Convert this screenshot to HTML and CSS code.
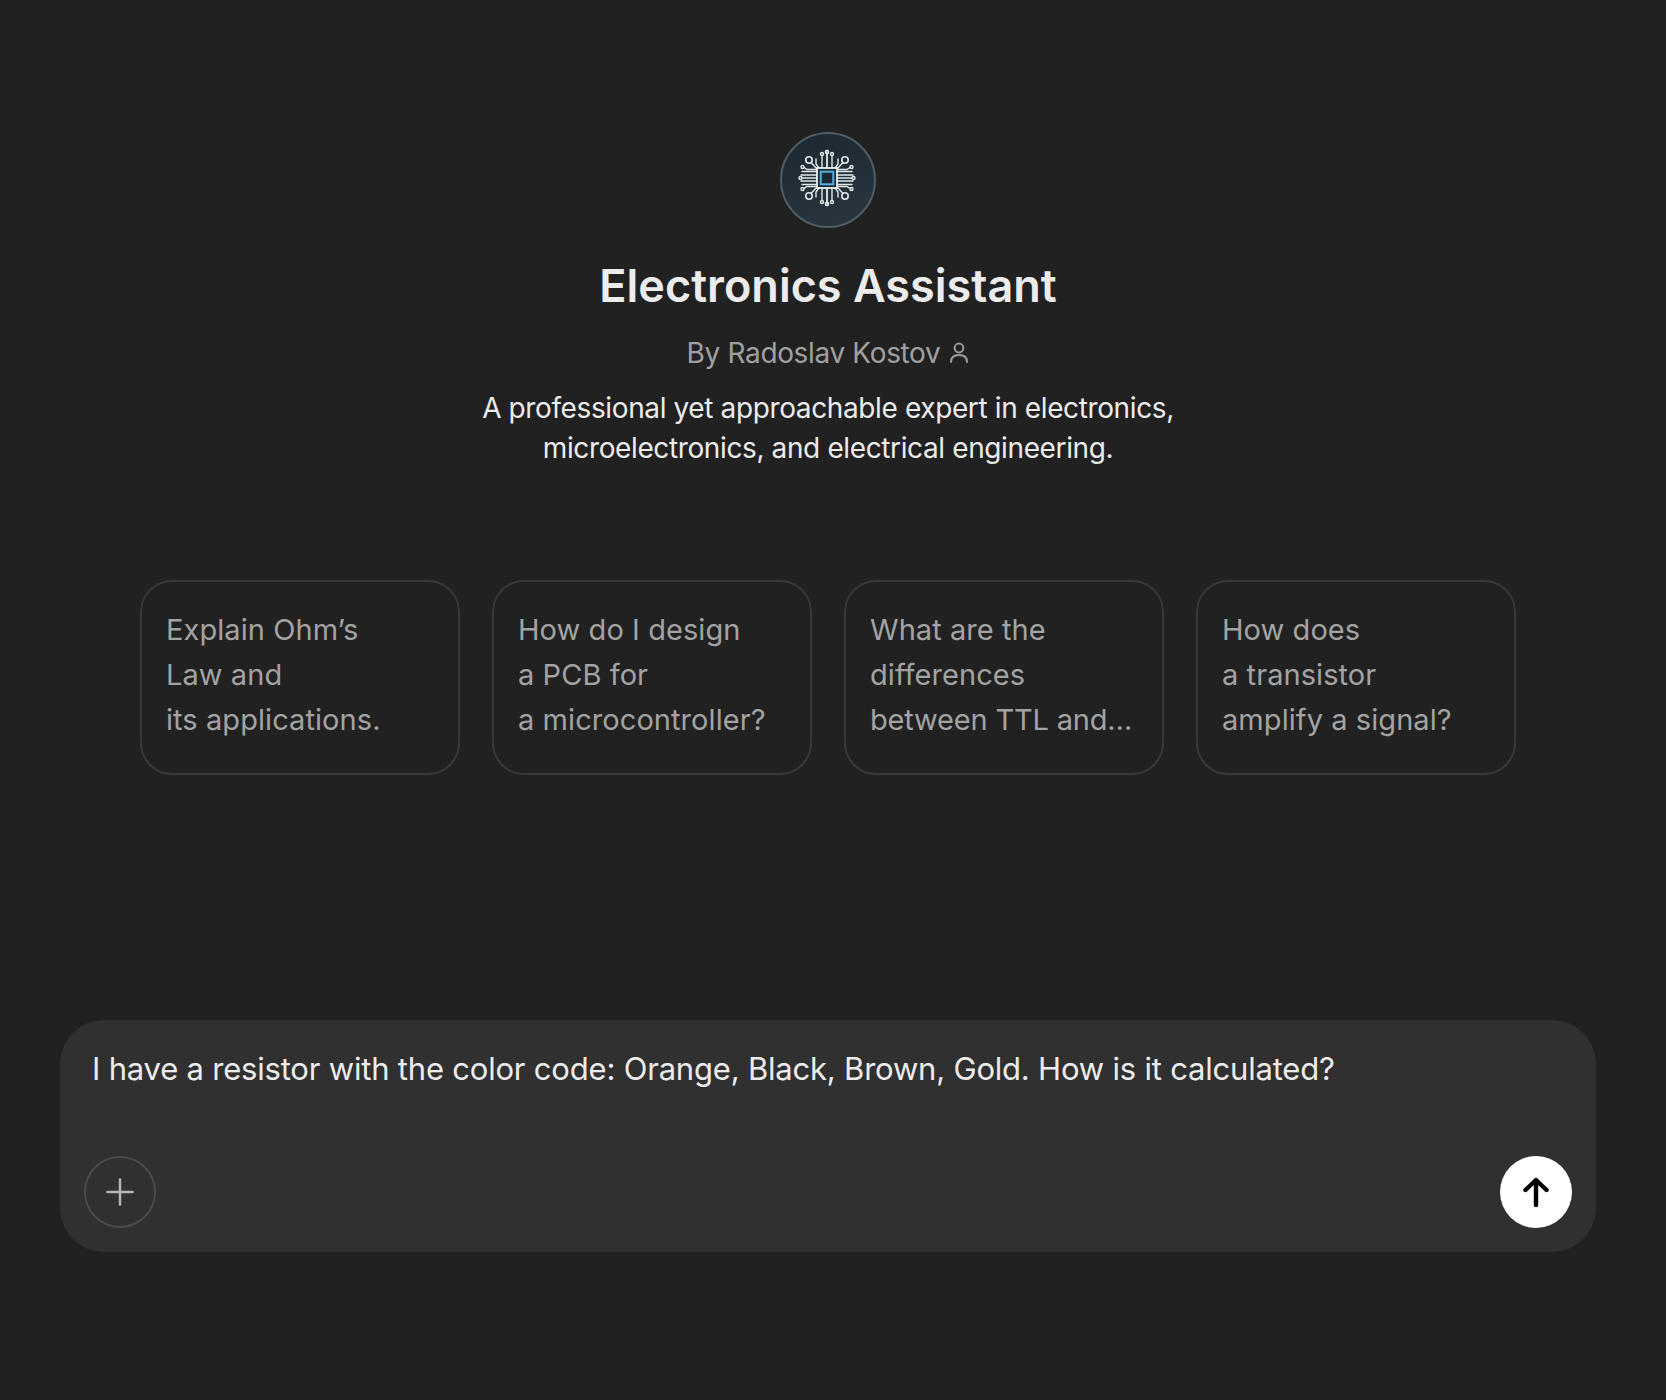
FILE: index.html
```html
<!DOCTYPE html>
<html lang="en">
<head>
    <meta charset="UTF-8">
    <meta name="viewport" content="width=device-width, initial-scale=1.0">
    <title>Electronics Assistant</title>
    <link rel="stylesheet" href="styles.css">
</head>
<body>
    <div class="page">
        <div class="profile">
            <div class="avatar">
                <svg class="chip-icon" viewBox="-30 -30 60 60" fill="none" stroke="#e2e7ea" stroke-width="1.4" stroke-linecap="round">
                    <defs>
                        <g id="quarter">
                            <path d="M-10 -6.5H-25M-10 -3H-26"/>
                            <path d="M-5 -10V-22.5"/>
                            <circle cx="-5" cy="-24" r="1.5"/>
                            <path d="M0 -10V-24.5"/>
                            <circle cx="0" cy="-26" r="1.5"/>
                            <path d="M-8 -10L-11 -14V-19"/>
                            <path d="M-10 -9L-16 -15.5"/>
                            <circle cx="-18" cy="-18" r="3.2" stroke-width="1.6"/>
                            <path d="M-10.5 -8.5H-20L-23 -10.5"/>
                            <circle cx="-24.5" cy="-11" r="1.5"/>
                        </g>
                    </defs>
                    <use href="#quarter"/>
                    <use href="#quarter" transform="scale(-1 1)"/>
                    <use href="#quarter" transform="scale(1 -1)"/>
                    <use href="#quarter" transform="scale(-1 -1)"/>
                    <path d="M-10 0H-25M10 0H25"/>
                    <circle cx="-26.5" cy="0" r="1.5"/>
                    <circle cx="26.5" cy="0" r="1.5"/>
                    <rect x="-10" y="-10" width="20" height="20" fill="#1c2933" stroke="#eef1f3" stroke-width="1.8"/>
                    <rect x="-6.3" y="-6.3" width="12.6" height="12.6" fill="#1c2933" stroke="#4fb3dc" stroke-width="2"/>
                </svg>
            </div>
            <h1 class="name">Electronics Assistant</h1>
            <div class="author">
                <span>By Radoslav Kostov</span>
                <svg class="author-icon" viewBox="0 0 20 24" fill="none" stroke="#9b9b9b" stroke-width="2" stroke-linecap="round">
                    <circle cx="10" cy="7" r="4.4"/>
                    <path d="M2 21c0-5 3.5-7 8-7s8 2 8 7"/>
                </svg>
            </div>
            <p class="description">A professional yet approachable expert in electronics,<br>microelectronics, and electrical engineering.</p>
        </div>

        <div class="starters">
            <div class="starter">Explain Ohm’s<br>Law and<br>its applications.</div>
            <div class="starter">How do I design<br>a PCB for<br>a microcontroller?</div>
            <div class="starter">What are the<br>differences<br><span class="starter-cut">between TTL and…</span></div>
            <div class="starter">How does<br>a transistor<br>amplify a signal?</div>
        </div>

        <div class="composer">
            <div class="composer-text">I have a resistor with the color code: Orange, Black, Brown, Gold. How is it calculated?</div>
            <div class="composer-actions">
                <button class="attach-btn">
                    <svg viewBox="0 0 28 28" fill="none" stroke="#b4b4b4" stroke-width="2.6" stroke-linecap="round">
                        <path d="M14 1.5V26.5M1.5 14H26.5"/>
                    </svg>
                </button>
                <button class="send-btn">
                    <svg viewBox="0 0 26 30" fill="none" stroke="#000" stroke-width="4.4" stroke-linecap="round" stroke-linejoin="round">
                        <path d="M13 28V3M2.5 13L13 3L23.5 13"/>
                    </svg>
                </button>
            </div>
        </div>
    </div>
</body>
</html>
```

FILE: styles.css
```css
body {
    margin: 0;
    background-color: #212121;
    font-family: Inter, "Liberation Sans", sans-serif;
}

.page {
    display: flex;
    flex-direction: column;
    align-items: center;
    width: 1656px;
    height: 1400px;
    padding-top: 132px;
    box-sizing: border-box;
}

.profile {
    display: flex;
    flex-direction: column;
    align-items: center;
}

.avatar {
    width: 96px;
    height: 96px;
    box-sizing: border-box;
    border: 2px solid #4f5d66;
    border-radius: 50%;
    background: linear-gradient(160deg, #1c2831, #2a373f);
    display: flex;
    align-items: center;
    justify-content: center;
}

.chip-icon {
    width: 60px;
    height: 60px;
    margin: 0 2px 5px 0;
}

.name {
    margin: 30px 0 0;
    font-size: 45px;
    line-height: 56px;
    font-weight: 555;
    color: #ececec;
}

.author {
    display: flex;
    align-items: center;
    gap: 9px;
    margin-top: 19px;
    font-size: 28px;
    font-weight: 375;
    line-height: 40px;
    letter-spacing: -0.35px;
    color: #a0a0a0;
}

.author-icon {
    width: 20px;
    height: 24px;
}

.description {
    margin: 15px 0 0;
    font-size: 28px;
    font-weight: 375;
    line-height: 40px;
    letter-spacing: -0.38px;
    text-align: center;
    color: #ececec;
}

.starters {
    display: grid;
    grid-template-columns: repeat(4, 320px);
    gap: 32px;
    margin-top: 112px;
}

.starter {
    box-sizing: border-box;
    height: 195px;
    padding: 25px 24px;
    border: 2px solid #383838;
    border-radius: 32px;
    font-size: 29px;
    font-weight: 375;
    line-height: 45px;
    letter-spacing: 0.07px;
    color: #a3a3a3;
    white-space: nowrap;
}

.starter-cut {
    letter-spacing: -0.18px;
}

.composer {
    box-sizing: border-box;
    width: 1536px;
    height: 232px;
    margin-top: 245px;
    padding: 28px 24px 24px;
    border-radius: 44px;
    background-color: #303030;
    display: flex;
    flex-direction: column;
    justify-content: space-between;
}

.composer-text {
    padding-left: 8px;
    font-size: 31px;
    font-weight: 375;
    line-height: 42px;
    letter-spacing: -0.2px;
    color: #ececec;
}

.composer-actions {
    display: flex;
    justify-content: space-between;
}

.attach-btn,
.send-btn {
    width: 72px;
    height: 72px;
    padding: 0;
    border-radius: 50%;
    display: flex;
    align-items: center;
    justify-content: center;
}

.attach-btn {
    background: none;
    border: 2px solid #4a4a4a;
}

.attach-btn svg {
    width: 28px;
    height: 28px;
}

.send-btn {
    background-color: #fff;
    border: none;
}

.send-btn svg {
    width: 26px;
    height: 30px;
}
```
